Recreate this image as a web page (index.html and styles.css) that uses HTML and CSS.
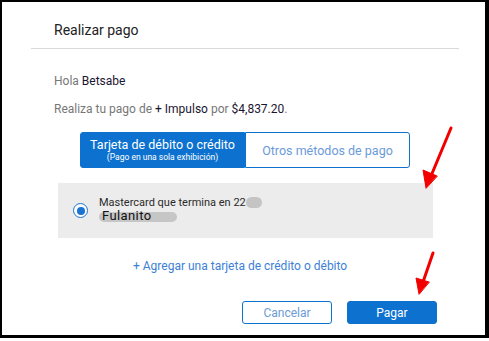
FILE: index.html
```html
<!DOCTYPE html>
<html lang="es">
<head>
  <meta charset="UTF-8" />
  <meta name="viewport" content="width=device-width, initial-scale=1.0"/>
  <title>Realizar pago</title>
  <link rel="stylesheet" href="styles.css">
</head>
<body>
  <div class="marco">
    <!-- Encabezado -->
    <div class="encabezado">Realizar pago</div>

    <div class="contenido">
      <p class="saludo">Hola <span class="nombre">Betsabe</span></p>
      <p class="resumen">Realiza tu pago de <span class="nombre">+ Impulso</span> por <span class="nombre">$4,837.20</span>.</p>

      <!-- Pestañas -->
      <div class="pestanas">
        <button class="pestana activa">
          Tarjeta de débito o crédito
          <small>(Pago en una sola exhibición)</small>
        </button>
        <button class="pestana">Otros métodos de pago</button>
      </div>

      <!-- Tarjeta guardada -->
      <div class="tarjeta">
        <span class="radio"><span class="punto"></span></span>
        <div class="datos">
          <div class="linea1">Mastercard que termina en 22<span class="borron"></span></div>
          <div class="linea2"><span class="borron-largo"></span><span class="titular">Fulanito</span></div>
        </div>
      </div>

      <a href="#" class="agregar">+ Agregar una tarjeta de crédito o débito</a>

      <div class="acciones">
        <button class="btn cancelar">Cancelar</button>
        <button class="btn pagar">Pagar</button>
      </div>
    </div>

    <!-- Flechas rojas encima -->
    <svg class="flechas" width="489" height="341" viewBox="0 0 489 341">
      <g stroke="#f20000" stroke-width="3" stroke-linecap="round" fill="#f20000">
        <line x1="451" y1="128" x2="431" y2="176" />
        <polygon points="426,188 423,170 437,176" stroke-width="1" stroke-linejoin="round" />
        <line x1="433" y1="253" x2="423" y2="282" />
        <polygon points="419,294 416,278 429,282" stroke-width="1" stroke-linejoin="round" />
      </g>
    </svg>
  </div>
</body>
</html>
```

FILE: styles.css
```css
/* Reset básico */
* {
  margin: 0;
  padding: 0;
  box-sizing: border-box;
}

body {
  font-family: Roboto, "Liberation Sans", sans-serif;
  background: #fff;
  color: #222;
}

.marco {
  position: relative;
  width: 489px;
  height: 338px;
  border-style: solid;
  border-color: #000;
  border-width: 2px 4px 3px 2px;
  background: #fff;
}

.encabezado {
  margin: 0 26px 0 29px;
  padding: 20px 0 10px 23px;
  font-size: 14px;
  line-height: 16px;
  color: #222;
  border-bottom: 1px solid #d9d9d9;
}

.contenido {
  display: flex;
  flex-direction: column;
}

.saludo,
.resumen {
  padding-left: 52px;
  font-size: 12px;
  line-height: 16px;
  color: #777;
}

.saludo {
  margin-top: 24px;
}

.resumen {
  margin-top: 12px;
}

.nombre {
  color: #1c1530;
}

.pestanas {
  display: flex;
  margin: 15px 0 0 78px;
}

.pestana {
  width: 165px;
  height: 36px;
  font-family: inherit;
  font-size: 12.5px;
  border: 1px solid #0d72cf;
  background: #fff;
  color: #6b9ad8;
  border-radius: 0 3px 3px 0;
  cursor: pointer;
}

.pestana.activa {
  background: #0d72cf;
  color: #fff;
  border-radius: 3px 0 0 3px;
  line-height: 14px;
}

.pestana small {
  display: block;
  font-size: 8.5px;
  line-height: 11px;
}

.tarjeta {
  display: flex;
  align-items: center;
  margin: 15px 0 0 56px;
  width: 375px;
  height: 55px;
  background: #ececec;
  padding-left: 15px;
}

.radio {
  width: 15px;
  height: 15px;
  border: 1.5px solid #1a73d0;
  border-radius: 50%;
  background: #fff;
  display: flex;
  align-items: center;
  justify-content: center;
}

.punto {
  width: 8px;
  height: 8px;
  border-radius: 50%;
  background: #1a73d0;
}

.datos {
  margin-left: 11px;
  margin-top: -2px;
}

.linea1 {
  font-size: 11px;
  line-height: 13px;
  color: #2a2a2a;
  display: flex;
  align-items: center;
}

.borron {
  display: inline-block;
  width: 16px;
  height: 11px;
  border-radius: 6px;
  background: #c4c4c4;
}

.linea2 {
  position: relative;
  font-size: 13px;
  line-height: 14px;
  color: #111;
  padding-left: 3px;
  letter-spacing: 0.4px;
}

.borron-largo {
  position: absolute;
  left: 0;
  top: 3px;
  width: 78px;
  height: 10px;
  border-radius: 5px;
  background: #c6c6c6;
}

.titular {
  position: relative;
}

.agregar {
  align-self: flex-start;
  margin: 20px 0 0 131px;
  font-size: 12px;
  line-height: 16px;
  color: #3d7fd6;
  text-decoration: none;
}

.acciones {
  display: flex;
  gap: 15px;
  margin: 27px 0 0 240px;
}

.btn {
  width: 90px;
  height: 23px;
  font-family: inherit;
  font-size: 12px;
  border-radius: 3px;
  border: 1px solid #0d72cf;
  cursor: pointer;
}

.cancelar {
  background: #fff;
  color: #6c9ad6;
}

.pagar {
  background: #0d72cf;
  color: #fff;
}

.flechas {
  position: absolute;
  left: -2px;
  top: -2px;
  pointer-events: none;
}
```
